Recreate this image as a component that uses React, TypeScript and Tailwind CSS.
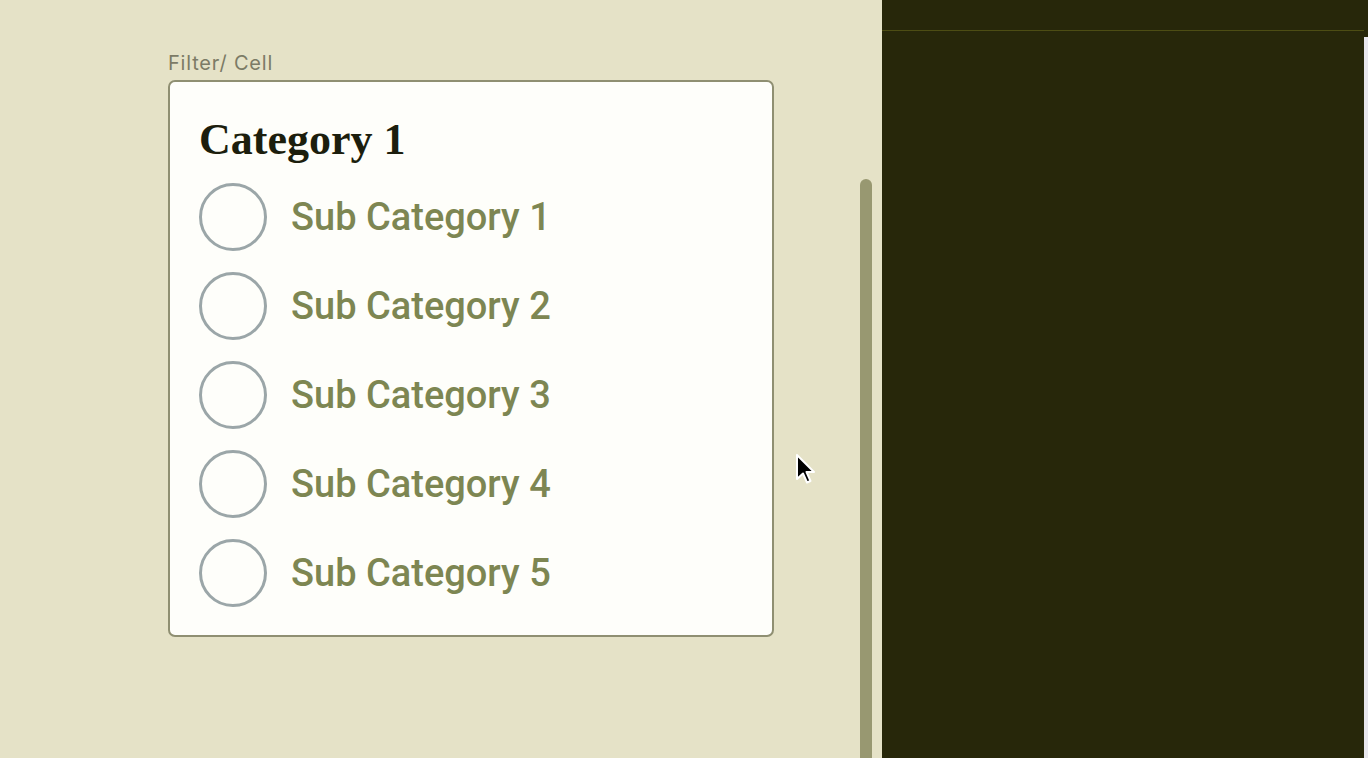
import React from 'react';

const subCategories = ['Sub Category 1', 'Sub Category 2', 'Sub Category 3', 'Sub Category 4', 'Sub Category 5'];

const Cursor: React.FC = () => (
  <svg className="absolute left-[794px] top-[452px]" width="24" height="36" viewBox="0 0 24 36">
    <path d="M3 3 L3 27 L9 21.5 L13 30.5 L16.5 29 L12.5 20 L20 20 Z" fill="#000" stroke="#fff" strokeWidth="2" strokeLinejoin="round" />
  </svg>
);

export default function App() {
  return (
    <div className="relative flex h-[758px] w-[1368px] overflow-hidden bg-[#e5e2c7]">
      <div className="w-[860px] shrink-0 pl-[168px] pt-[51px]">
        <div
          className="text-[20px] leading-[24px] tracking-[0.8px] text-[#7c7b66]"
          style={{ fontFamily: 'Inter, "Liberation Sans", sans-serif' }}
        >
          Filter/ Cell
        </div>
        <div className="mt-[5px] w-[606px] rounded-[7px] border-2 border-[#8f8f72] bg-[#fefefa] pl-[29px] pt-[30px] pb-[28px]">
          <h2
            className="text-[44px] font-bold leading-[56px] text-[#1c1e0d]"
            style={{ fontFamily: '"Liberation Serif", serif' }}
          >
            Category 1
          </h2>
          <ul className="mt-[15px] flex flex-col gap-[21px]">
            {subCategories.map(label => (
              <li key={label} className="flex items-center gap-[24px]">
                <span className="h-[68px] w-[68px] shrink-0 rounded-full border-[3px] border-[#9ba6a8]" />
                <span
                  className="text-[38px] font-medium leading-[40px] text-[#7d8652]"
                  style={{ fontFamily: 'Roboto, "Liberation Sans", sans-serif' }}
                >
                  {label}
                </span>
              </li>
            ))}
          </ul>
        </div>
      </div>
      <div className="mt-[179px] w-[12px] shrink-0 rounded-t-full bg-[#989871]" />
      <div className="w-[10px] shrink-0" />
      <div className="flex-1 bg-[#27270a]">
        <div className="h-[31px] border-b border-[#4d4d14]" />
      </div>
      <div className="flex w-[4px] shrink-0 flex-col">
        <div className="h-[37px] bg-[#27270a]" />
        <div className="flex-1 bg-[#e8e7ee]" />
      </div>
      <Cursor />
    </div>
  );
}
